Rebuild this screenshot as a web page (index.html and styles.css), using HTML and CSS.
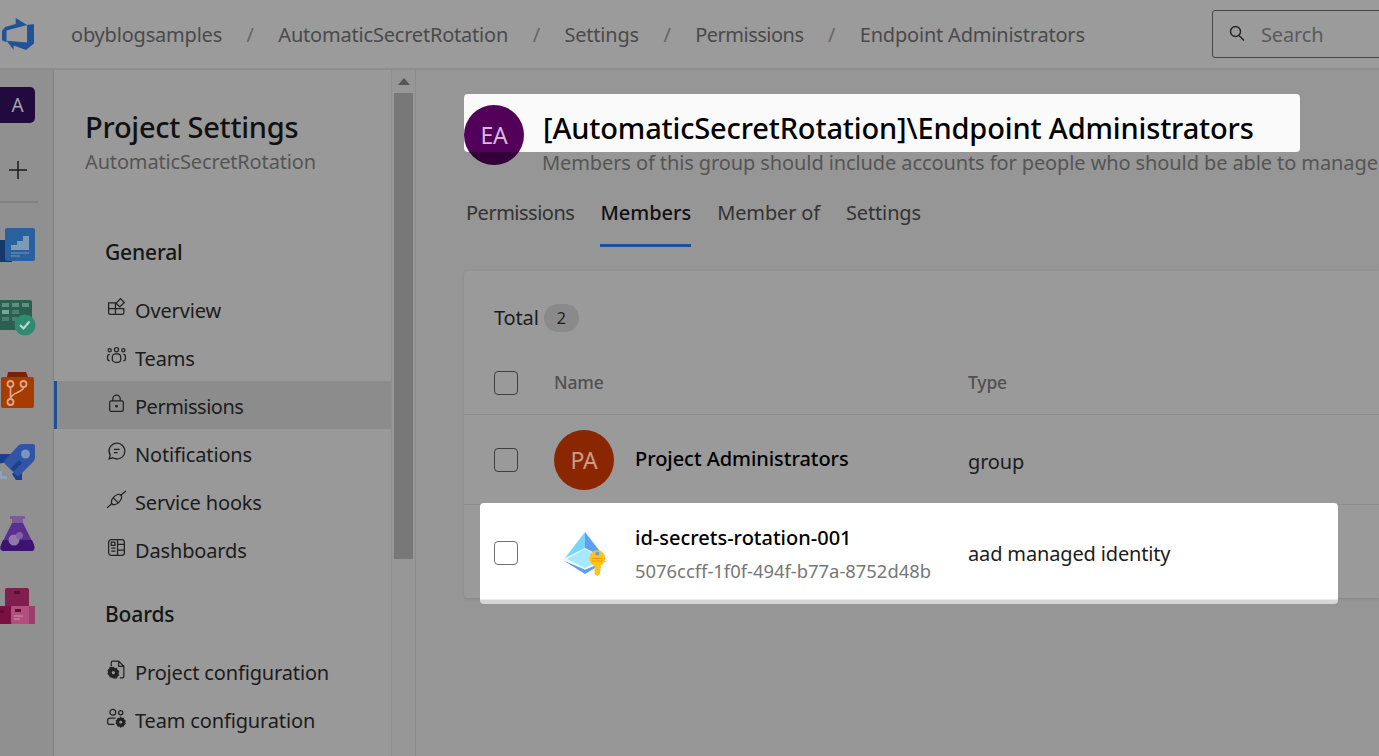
FILE: index.html
```html
<!DOCTYPE html>
<html lang="en">
<head>
    <meta charset="UTF-8">
    <title>Endpoint Administrators</title>
    <link rel="stylesheet" href="styles.css">
</head>
<body>
    <header class="topbar">
        <div class="logo-cell">
            <svg width="36" height="36" viewBox="0 0 18 18"><path fill="#1f5296" d="M17 4v9.74l-4 3.28-6.2-2.26V17l-3.51-4.59 10.23.8V4.44zm-3.41.49L7.85 1v2.96L2.58 5.51 1 7.54v4.61l2.26 1V7.22z"/></svg>
        </div>
        <nav class="crumbs">
            <span>obyblogsamples</span><i>/</i>
            <span>AutomaticSecretRotation</span><i>/</i>
            <span>Settings</span><i>/</i>
            <span class="tight">Permissions</span><i>/</i>
            <span>Endpoint Administrators</span>
        </nav>
        <div class="search">
            <svg width="20" height="20" viewBox="0 0 20 20" fill="none" stroke="#222" stroke-width="1.4"><circle cx="8.5" cy="7.5" r="5"/><path d="M12 11.5l5 5"/></svg>
            <span>Search</span>
        </div>
    </header>

    <div class="layout">
        <aside class="rail">
            <div class="org-tile">A</div>
            <div class="rail-plus">
                <svg width="20" height="20" viewBox="0 0 20 20"><path stroke="#1a1a1a" stroke-width="1.5" d="M10 1v18M1 10h18"/></svg>
            </div>
            <div class="rail-line"></div>
            <div class="rail-icons">
                <svg width="36" height="36" viewBox="0 0 36 36">
                    <rect x="-8" y="12" width="20" height="22" fill="#16396b"/>
                    <rect x="5" y="0" width="30" height="33" rx="2" fill="#29609f"/>
                    <path fill="#7d9ab8" d="M11 17h6v-4h6V8h6v14H11z"/>
                    <path stroke="#7d9ab8" d="M11 25h18M11 28h9"/>
                </svg>
                <svg width="36" height="36" viewBox="0 0 36 36">
                    <rect x="-4" y="0" width="36" height="30" rx="2" fill="#29604f"/>
                    <path fill="#5e8f80" d="M2 3h7v4H2zM12 3h7v4h-7zM22 3h7v4h-7z"/>
                    <path fill="#7aa598" d="M2 10h7v4H2z"/>
                    <path fill="#4c7f70" d="M12 10h7v4h-7zM2 17h7v4H2zM12 17h5v4h-5z"/>
                    <circle cx="25" cy="25" r="10.500" fill="#2f8a70"/>
                    <path fill="none" stroke="#b9d8cf" stroke-width="2.200" d="M20 25l3.500 3.500 6-7"/>
                </svg>
                <svg width="36" height="36" viewBox="0 0 36 36">
                    <path fill="#7a2300" d="M8 0h18l2 5h3v6H4V5h3z"/>
                    <rect x="1" y="5" width="33" height="31" rx="2" fill="#a63c00"/>
                    <g fill="none" stroke="#d9a78e" stroke-width="1.800">
                        <circle cx="10.500" cy="12" r="3"/><circle cx="23.500" cy="12" r="3"/><circle cx="10.500" cy="30" r="3"/>
                        <path d="M10.500 15v12M23.500 15c0 6-13 5-13 12"/>
                    </g>
                </svg>
                <svg width="36" height="36" viewBox="0 0 36 36">
                    <path fill="#1c3f8a" d="M-2 10h14L8 18-2 20zM22 22v14h-6l-4-6z"/>
                    <path fill="#2f55a4" d="M22 0h11q2 0 2 2v11q0 3-2 5L20 31q-2 2-4 0L5 20q-2-2 0-4L17 3q2-3 5-3z"/>
                    <circle cx="25.500" cy="10" r="4.500" fill="#7d93c0"/>
                    <path fill="#1d3f8c" d="M22 19l-8 8-3-3 8-8z"/>
                    <path fill="#8ea0c4" d="M0 27h2v5h5v3H0z"/>
                </svg>
                <svg width="36" height="36" viewBox="0 0 36 36">
                    <path fill="#7b5b9c" d="M10 0h15v3h-2v5H12V3h-2z"/>
                    <path fill="#5a2f8f" d="M12 7h11l11 22q2 6-3 6H4q-5 0-3-6z"/>
                    <path fill="#3c1272" d="M3 24h29l2 5q1 6-3 6H4q-5 0-3-6z"/>
                    <circle cx="14" cy="24" r="5.500" fill="#8f77ac"/>
                    <circle cx="19.500" cy="19.500" r="3.500" fill="#7f63a2"/>
                </svg>
                <svg width="36" height="36" viewBox="0 0 36 36">
                    <rect x="5" y="0" width="24" height="22" rx="2" fill="#7f1f50"/>
                    <rect x="-6" y="18" width="20" height="18" rx="1" fill="#7a0f42"/>
                    <rect x="11" y="18" width="24" height="18" rx="1" fill="#b04f7e"/>
                    <rect x="29" y="18" width="6" height="18" fill="#9c3c6c"/>
                    <path fill="#5f0b33" d="M14 3h6v3h-6zM-1 22h5v3h-5zM15 21h6v3h-6z"/>
                    <path stroke="#d398b4" d="M14 28h9M14 31h6"/>
                </svg>
            </div>
        </aside>

        <aside class="sidebar">
            <div class="sidebar-body">
                <h2 class="sidebar-title">Project Settings</h2>
                <div class="sidebar-sub">AutomaticSecretRotation</div>

                <h3 class="nav-head">General</h3>
                <ul class="nav-list">
                    <li><svg viewBox="0 0 20 20"><path d="M2.500 5.500h6.500v11H4q-1.500 0-1.500-1.500zM9 11h8v4q0 1.500-1.500 1.500H9M2.500 11H9"/><path d="M11 2.500h5v6h-5z" transform="rotate(45 13.500 5.500)"/></svg>Overview</li>
                    <li><svg viewBox="0 0 20 20"><circle cx="10" cy="4.500" r="2"/><circle cx="3.500" cy="5" r="1.500"/><circle cx="16.500" cy="5" r="1.500"/><rect x="6" y="8.500" width="8" height="8" rx="3"/><path d="M3.500 9q-2 0-2 2v2q0 2 2 2M16.500 9q2 0 2 2v2q0 2-2 2"/></svg>Teams</li>
                    <li class="is-active tight"><svg viewBox="0 0 20 20"><rect x="3.500" y="7.500" width="13" height="10" rx="1.500"/><path d="M6.500 7.500V5.500a3.500 3.500 0 0 1 7 0v2"/><circle cx="10" cy="12.500" r=".7" fill="#222"/></svg>Permissions</li>
                    <li><svg viewBox="0 0 20 20"><path d="M3 17l1-3.500A7.500 7.500 0 1 1 6.500 16z"/><path d="M7.500 8h5.500M7.500 11h3.500"/></svg>Notifications</li>
                    <li><svg viewBox="0 0 20 20"><path d="M1 18l5-4.500M14 6l5-4M7 8.500l5 5"/><ellipse cx="10" cy="10" rx="6" ry="3.500" transform="rotate(-45 10 10)"/></svg>Service hooks</li>
                    <li><svg viewBox="0 0 20 20"><rect x="2.500" y="2.500" width="15" height="15" rx="2.500"/><path d="M11 2.500v15M11 7h6.500M11 12.500h6.500M5 10.500h4M5 13.500h4"/><rect x="5" y="5" width="3.500" height="3"/></svg>Dashboards</li>
                </ul>

                <h3 class="nav-head nav-head-boards">Boards</h3>
                <ul class="nav-list">
                    <li><svg viewBox="0 0 20 20"><path d="M5 7V3.500Q5 2 6.500 2H12l5 5v9.500q0 1.500-1.500 1.500H13M12 2v5h5"/><path fill="#222" d="M7 8l1.200 1.300 1.800-.2.600 1.700 1.400 1-.8 1.700.8 1.700-1.400 1-.6 1.700-1.800-.2L7 18l-1.200-1.300-1.800.2-.6-1.700-1.400-1 .8-1.700-.8-1.700 1.400-1 .6-1.700 1.800.2z"/><circle cx="7" cy="13" r="1.500" fill="#999" stroke="none"/></svg>Project configuration</li>
                    <li><svg viewBox="0 0 20 20"><circle cx="6.500" cy="5" r="2.800"/><circle cx="14" cy="5.500" r="2"/><path d="M1.500 15v-2q0-2.500 2.500-2.500h5M1.500 15q0 1.500 1.500 1.500h5"/><path fill="#222" d="M14 10l1 1.100 1.500-.2.500 1.500 1.200.8-.7 1.300.7 1.300-1.200.8-.5 1.500-1.500-.2L14 19l-1-1.100-1.500.2-.5-1.500-1.200-.8.700-1.300-.7-1.300 1.200-.8.500-1.500 1.500.2z"/><circle cx="14" cy="14.500" r="1.300" fill="#999" stroke="none"/></svg>Team configuration</li>
                </ul>
            </div>
            <div class="scrollbar">
                <div class="scroll-arrow"></div>
                <div class="scroll-thumb"></div>
            </div>
        </aside>

        <main class="content">
            <section class="group-header">
                <div class="header-highlight"></div>
                <div class="group-avatar">EA</div>
                <div class="group-text">
                    <h1>[AutomaticSecretRotation]\Endpoint Administrators</h1>
                    <p>Members of this group should include accounts for people who should be able to manage</p>
                </div>
            </section>

            <div class="tabs">
                <span class="tight">Permissions</span>
                <span class="tab-active">Members</span>
                <span>Member of</span>
                <span>Settings</span>
            </div>

            <section class="card">
                <div class="total">Total <b>2</b></div>
                <div class="row row-head">
                    <div class="check"></div>
                    <div class="col-name">Name</div>
                    <div class="col-type">Type</div>
                </div>
                <div class="row row-group">
                    <div class="check"></div>
                    <div class="col-name">
                        <div class="pa-avatar">PA</div>
                        <strong>Project Administrators</strong>
                    </div>
                    <div class="col-type">group</div>
                </div>
                <div class="row row-identity">
                    <div class="check"></div>
                    <div class="col-name">
                        <svg class="id-icon" width="60" height="60" viewBox="0 0 60 60">
                            <path fill="#5ea0ef" d="M8.700 37L31 46.500 54.300 37 31 51z"/>
                            <path fill="#eafaff" d="M8.700 37L31 9l23.300 28L31 46.500z"/>
                            <path fill="#76d6ff" d="M31 9L11 35l20-10z"/>
                            <path fill="#5ea0ef" d="M31 9l20 26-20-10z"/>
                            <path fill="#a8e8ff" d="M13 36l18-10 18 10-18 9z"/>
                            <circle cx="43.300" cy="35.300" r="8" fill="#fcc419"/>
                            <path fill="#fcc419" d="M40.600 40h5.400v2.500l1.500 1.500-1.500 1.500 1 1-1 1.500V51l-2.700 2-2.700-2z"/>
                            <circle cx="43.300" cy="30.500" r="2" fill="#5ea0ef"/>
                            <path stroke="#ea9f00" d="M38 35.500h10.500M38 38h10.500"/>
                        </svg>
                        <div class="id-text">
                            <strong>id-secrets-rotation-001</strong>
                            <small>5076ccff-1f0f-494f-b77a-8752d48b</small>
                        </div>
                    </div>
                    <div class="col-type">aad managed identity</div>
                </div>
            </section>
        </main>
    </div>
</body>
</html>
```

FILE: styles.css
```css
* {
    box-sizing: border-box;
    margin: 0;
    padding: 0;
}

html, body {
    width: 1379px;
    height: 756px;
    overflow: hidden;
}

body {
    font-family: "Noto Sans", "Open Sans", sans-serif;
    font-size: 20px;
    letter-spacing: -0.15px;
    color: #1c1c1c;
    background: #999;
}

/* "Permissions" sale mas ancho en esta fuente */
.tight {
    letter-spacing: -0.5px;
}

/* Barra superior */
.topbar {
    display: flex;
    align-items: center;
    height: 70px;
    border-bottom: 2px solid #8e8e8e;
    background: #9b9b9b;
}

.logo-cell {
    display: flex;
    flex: 0 0 71px;
}

.crumbs {
    display: flex;
    flex: 1;
    align-items: center;
    color: #4a4a4a;
    letter-spacing: -0.2px;
    white-space: nowrap;
}

.crumbs .tight {
    letter-spacing: -0.5px;
}

.crumbs i {
    margin: 0 24.5px;
    font-style: normal;
    color: #666;
}

.search {
    display: flex;
    flex: 0 0 240px;
    align-items: center;
    gap: 14px;
    height: 48px;
    margin-right: -73px;
    padding-left: 14px;
    border: 1px solid #444;
    border-radius: 3px;
    color: #5a5a5a;
}

.layout {
    display: flex;
    height: 686px;
}

/* Barra de iconos */
.rail {
    flex: 0 0 54px;
    padding-top: 17px;
    border-right: 1px solid #838383;
    background: #909090;
    overflow: hidden;
}

.org-tile {
    display: flex;
    align-items: center;
    justify-content: center;
    width: 35px;
    height: 36px;
    border-radius: 0 5px 5px 0;
    background: #210a3e;
    color: #a9a3b4;
    font-size: 19px;
}

.rail-plus {
    display: flex;
    justify-content: center;
    width: 35px;
    margin-top: 37px;
}

.rail-line {
    width: 38px;
    height: 2px;
    margin-top: 21px;
    background: #828282;
}

.rail-icons {
    display: flex;
    flex-direction: column;
    gap: 36px;
    margin-top: 25px;
}

.rail-icons svg {
    display: block;
    overflow: hidden;
}

/* Menu lateral */
.sidebar {
    display: flex;
    flex: 0 0 362px;
    border-right: 1px solid #8c8c8c;
    background: #999;
}

.sidebar-body {
    flex: 0 0 337px;
}

.sidebar-title {
    margin: 37px 0 0 31px;
    font-size: 29px;
    font-weight: 500;
    letter-spacing: -0.25px;
    line-height: 40px;
    color: #111;
}

.sidebar-sub {
    margin: 2px 0 0 31px;
    color: #555;
    line-height: 26px;
}

.nav-head {
    margin: 62px 0 18px 51px;
    font-size: 21px;
    font-weight: 500;
    line-height: 30px;
    color: #151515;
}

.nav-head-boards {
    margin-top: 26px;
    margin-bottom: 18px;
}

.nav-list {
    list-style: none;
}

.nav-list li {
    display: flex;
    align-items: center;
    gap: 8px;
    height: 48px;
    padding: 2px 0 0 49px;
    border-left: 3px solid transparent;
    white-space: nowrap;
}

.nav-list svg {
    width: 21px;
    height: 21px;
    fill: none;
    stroke: #222;
    stroke-width: 1.2;
    margin-top: -5px;
}

.nav-list .is-active {
    border-left-color: #1f4f99;
    background: #8c8c8c;
}

.scrollbar {
    flex: 0 0 24px;
    padding: 4px 2px 0;
    background: #979797;
    border-left: 1px solid #8f8f8f;
}

.scroll-arrow {
    width: 0;
    height: 0;
    margin: 4px auto 8px;
    border: 6px solid transparent;
    border-top: 0;
    border-bottom: 7px solid #555;
}

.scroll-thumb {
    height: 466px;
    background: #787878;
}

/* Contenido */
.content {
    flex: 1;
    min-width: 0;
    padding-left: 48px;
    background: #969696;
}

.group-header {
    position: relative;
    display: flex;
    gap: 19px;
    padding-top: 35px;
    z-index: 0;
}

.header-highlight {
    position: absolute;
    top: 24px;
    left: 0;
    z-index: -1;
    width: 836px;
    height: 58px;
    border-radius: 4px;
    background: #fafafa;
}

.group-avatar {
    display: flex;
    flex: 0 0 60px;
    align-items: flex-start;
    justify-content: center;
    height: 60px;
    padding-top: 15px;
    border-radius: 50%;
    background: linear-gradient(#52005a 47px, #33003a 47px);
    color: #d8b8da;
    font-size: 23px;
    line-height: 30px;
}

.group-text {
    min-width: 0;
    white-space: nowrap;
}

.group-text h1 {
    margin-top: -1px;
    font-size: 29px;
    font-weight: 500;
    letter-spacing: -0.15px;
    line-height: 48px;
    color: #000;
}

.group-text p {
    color: #555;
    line-height: 28px;
    margin-top: -3px;
    margin-left: -1px;
    letter-spacing: -0.1px;
}

.tabs {
    display: flex;
    gap: 26px;
    margin: 5px 0 0 2px;
}

.tabs span {
    height: 65px;
    padding-top: 17px;
    line-height: 28px;
    color: #333;
}

.tabs .tab-active {
    border-bottom: 3px solid #1f4f99;
    color: #111;
    font-weight: 500;
    letter-spacing: 0;
}

.card {
    height: 327px;
    margin-top: 24px;
    border-radius: 4px 0 0 4px;
    background: #9a9a9a;
    box-shadow: 0 1px 3px #858585;
}

.total {
    display: flex;
    align-items: center;
    gap: 5px;
    height: 80px;
    padding: 13px 0 0 30px;
}

.total b {
    display: flex;
    align-items: center;
    justify-content: center;
    width: 35px;
    height: 28px;
    border-radius: 14px;
    background: #8a8a8a;
    font-size: 16px;
    font-weight: 400;
}

.row {
    display: grid;
    grid-template-columns: 60px 414px 1fr;
    align-items: center;
    padding-left: 30px;
    border-bottom: 1px solid #8c8c8c;
}

.check {
    width: 24px;
    height: 24px;
    border: 1px solid #3e3e3e;
    border-radius: 4px;
}

.row-head {
    height: 64px;
    padding-bottom: 2px;
    font-size: 17.5px;
    font-weight: 500;
    color: #505050;
}

.row-head .check {
    margin-top: 2px;
}

.row-group {
    height: 90px;
}

.row-group .col-type {
    margin-top: 3px;
}

.col-name {
    display: flex;
    align-items: center;
    min-width: 0;
}

.pa-avatar {
    display: flex;
    align-items: center;
    justify-content: center;
    flex: 0 0 60px;
    height: 60px;
    margin-right: 21px;
    border-radius: 50%;
    background: #8a2700;
    color: #c99d8a;
    font-size: 23px;
}

.col-name strong {
    font-weight: 500;
    color: #000;
    letter-spacing: -0.05px;
}

.row-group strong {
    margin-top: -2px;
}

.row-identity {
    position: relative;
    z-index: 0;
    height: 93px;
    border-bottom: 0;
}

.row-identity::before {
    content: "";
    position: absolute;
    top: -2px;
    left: 16px;
    z-index: -1;
    width: 858px;
    height: 101px;
    border-radius: 4px;
    background: linear-gradient(#fff 96px, #d6d6d6 97px);
}

.row-identity .check {
    margin-top: 2px;
    border-color: #707070;
}

.row-identity .col-name {
    margin-top: 2px;
}

.row-identity .col-type {
    margin-top: 4px;
}

.id-icon {
    flex: 0 0 60px;
    margin-right: 21px;
}

.id-text {
    display: flex;
    flex-direction: column;
    width: 298px;
    padding-top: 1px;
    overflow: hidden;
    white-space: nowrap;
}

.id-text strong {
    letter-spacing: 0;
}

.id-text small {
    font-size: 18.4px;
    letter-spacing: 0;
    color: #777;
    margin-top: 7px;
}
```
